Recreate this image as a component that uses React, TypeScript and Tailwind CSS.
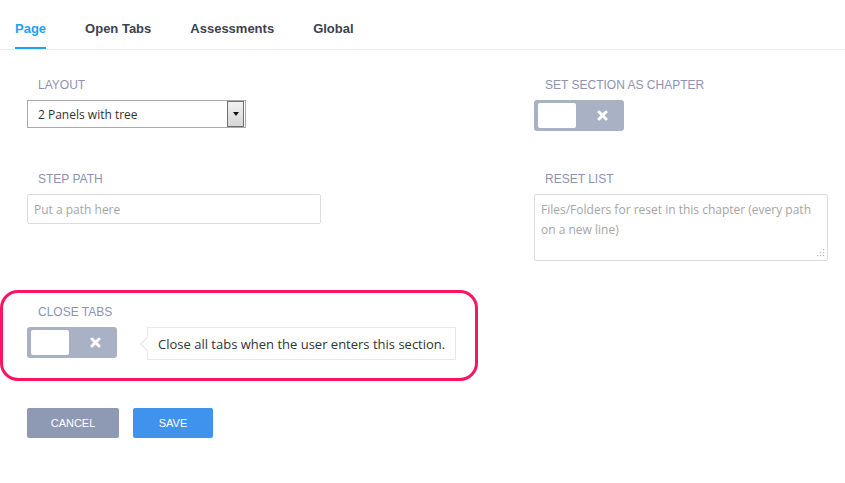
import { useState } from 'react';

const tabs = ['Page', 'Open Tabs', 'Assessments', 'Global'];

const FieldLabel = ({ children, className = 'mb-[7px]' }: { children: React.ReactNode; className?: string }) => (
  <div className={`h-[16px] leading-[16px] pl-[11px] text-[12px] text-[#8c92b4] uppercase font-['Liberation_Sans',Arial,sans-serif] ${className}`}>
    {children}
  </div>
);

const Toggle = () => (
  <div className="w-[90px] h-[31px] bg-[#a9b2c5] rounded-[3px] p-[4px] flex items-center">
    <div className="w-[38px] h-[25px] bg-white rounded-[2px]" />
    <div className="flex-1 flex items-center justify-center pl-[8px]">
      <svg width="11" height="11" viewBox="0 0 11 11">
        <path d="M2 2 L9 9 M9 2 L2 9" stroke="#fff" strokeWidth="3" strokeLinecap="round" />
      </svg>
    </div>
  </div>
);

const App = () => {
  const [active, setActive] = useState('Page');

  return (
    <div className="w-full h-[483px] bg-white font-['Open_Sans',sans-serif]">
      <div className="h-[50px] border-b border-[#ececec] flex gap-[39px] pl-[15px] font-['Liberation_Sans',Arial,sans-serif]">
        {tabs.map((tab) => (
          <button
            key={tab}
            onClick={() => setActive(tab)}
            className={`h-[49px] pt-[21px] leading-[16px] text-[13px] font-bold border-b-2 flex items-start ${
              active === tab ? 'text-[#1ea1f2] border-[#1ea1f2]' : 'text-[#3c4250] border-transparent'
            }`}
          >
            {tab}
          </button>
        ))}
      </div>

      <div className="px-[27px] pt-[27px]">
        <div className="grid grid-cols-[507px_294px] gap-y-[40px] items-start">
          <div>
            <FieldLabel>Layout</FieldLabel>
            <div className="w-[219px] h-[28px] border border-[#aaaaaa] bg-white flex items-center">
              <span className="flex-1 pl-[10px] pt-[1px] text-[12px] text-[#333]">2 Panels with tree</span>
              <div className="w-[17px] h-[26px] mr-[1px] border border-[#707070] bg-gradient-to-b from-[#f2f2f2] to-[#d6d6d6] flex items-center justify-center">
                <div className="w-0 h-0 border-l-[3.5px] border-r-[3.5px] border-t-[4px] border-l-transparent border-r-transparent border-t-[#111]" />
              </div>
            </div>
          </div>
          <div>
            <FieldLabel>Set section as chapter</FieldLabel>
            <Toggle />
          </div>

          <div>
            <FieldLabel>Step path</FieldLabel>
            <input
              placeholder="Put a path here"
              className="w-[294px] h-[30px] border border-[#dcdcdc] rounded-[2px] px-[6px] text-[12px] text-[#333] placeholder:text-[#a5a5a5] outline-none"
            />
          </div>
          <div>
            <FieldLabel>Reset list</FieldLabel>
            <div className="relative w-[294px] h-[67px]">
              <textarea
                placeholder="Files/Folders for reset in this chapter (every path on a new line)"
                className="w-full h-full border border-[#dcdcdc] rounded-[2px] px-[6px] py-[5px] text-[12px] leading-[20px] text-[#333] placeholder:text-[#a5a5a5] outline-none resize-none"
              />
              <svg className="absolute right-[3px] bottom-[4px]" width="8" height="8" viewBox="0 0 8 8">
                <rect x="6" y="0" width="1.2" height="1.2" fill="#b5b5b5" />
                <rect x="3" y="3" width="1.2" height="1.2" fill="#b5b5b5" />
                <rect x="6" y="3" width="1.2" height="1.2" fill="#b5b5b5" />
                <rect x="0" y="6" width="1.2" height="1.2" fill="#b5b5b5" />
                <rect x="3" y="6" width="1.2" height="1.2" fill="#b5b5b5" />
                <rect x="6" y="6" width="1.2" height="1.2" fill="#b5b5b5" />
              </svg>
            </div>
          </div>
        </div>

        <div className="-ml-[27px] mt-[29px] w-[478px] h-[91px] border-[3px] border-[#fb1462] rounded-[18px] pl-[24px] pt-[11px]">
          <FieldLabel>Close tabs</FieldLabel>
          <div className="flex items-start gap-[30px]">
            <Toggle />
            <div className="relative h-[33px] border border-[#e8e8e8] bg-white px-[10px] pt-[3px] flex items-center text-[13px] text-[#333]">
              <div className="absolute -left-[6px] top-[11px] w-[10px] h-[10px] bg-white border-l border-b border-[#e8e8e8] rotate-45" />
              <span className="relative">Close all tabs when the user enters this section.</span>
            </div>
          </div>
        </div>

        <div className="mt-[27px] flex gap-[14px] font-['Liberation_Sans',Arial,sans-serif]">
          <button className="w-[92px] h-[30px] rounded-[2px] bg-[#8e99b4] text-white text-[11px] uppercase">Cancel</button>
          <button className="w-[80px] h-[30px] rounded-[2px] bg-[#4093ec] text-white text-[11px] uppercase">Save</button>
        </div>
      </div>
    </div>
  );
};

export default App;
